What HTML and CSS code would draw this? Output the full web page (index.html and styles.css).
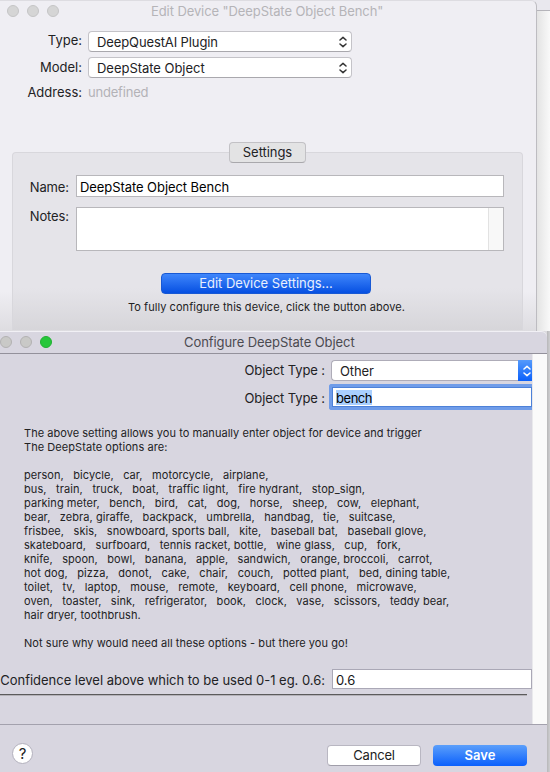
FILE: index.html
```html
<!DOCTYPE html>
<html lang="en">
<head>
<meta charset="utf-8">
<title>Edit Device</title>
<link rel="stylesheet" href="styles.css">
</head>
<body>
<section class="device-stage">
  <div class="device-window">
    <header class="device-title">
      <div class="lights"><i></i><i></i><i></i></div>
      <h1>Edit Device "DeepState Object Bench"</h1>
    </header>
    <div class="device-form">
      <label class="type-label">Type:</label>
      <div class="select"><span class="t-type">DeepQuestAI Plugin</span><svg viewBox="0 0 8 12" width="8" height="12"><path d="M1 4 4 1.4 7 4M1 8 4 10.6 7 8"/></svg></div>
      <label>Model:</label>
      <div class="select"><span class="t-model">DeepState Object</span><svg viewBox="0 0 8 12" width="8" height="12"><path d="M1 4 4 1.4 7 4M1 8 4 10.6 7 8"/></svg></div>
      <label class="address-label">Address:</label>
      <div class="undefined">undefined</div>
    </div>
    <div class="settings">
      <div class="tab">Settings</div>
      <div class="settings-grid">
        <label>Name:</label>
        <div class="name-field">DeepState Object Bench</div>
        <label>Notes:</label>
        <div class="notes-field"><div class="notes-scroll"></div></div>
      </div>
      <button class="edit-button"><span>Edit Device Settings...</span></button>
      <p class="hint">To fully configure this device, click the button above.</p>
    </div>
  </div>
</section>
<section class="config-stage">
  <div class="config-window">
    <header class="config-title">
      <div class="lights"><i></i><i></i><i class="green"></i></div>
      <h2>Configure DeepState Object</h2>
    </header>
    <div class="config-body">
      <div class="config-content">
        <div class="row row-select">
          <label>Object Type :</label>
          <div class="popup"><span>Other</span><div class="stepper"><svg viewBox="0 0 8 12" width="8" height="12"><path d="M1 4 4 1.4 7 4M1 8 4 10.6 7 8"/></svg></div></div>
        </div>
        <div class="row row-text">
          <label>Object Type :</label>
          <div class="focus-field"><span>bench</span></div>
        </div>
        <div class="notes">
          <p class="n1">The above setting allows you to manually enter object for device and trigger</p>
          <p>The DeepState options are:</p>
          <p>&nbsp;</p>
          <p>person,   bicycle,   car,   motorcycle,   airplane,</p>
          <p class="wide">bus,   train,   truck,   boat,   traffic light,   fire hydrant,   stop_sign,</p>
          <p>parking meter,   bench,   bird,   cat,   dog,   horse,   sheep,   cow,   elephant,</p>
          <p>bear,   zebra, giraffe,   backpack,   umbrella,   handbag,   tie,   suitcase,</p>
          <p>frisbee,   skis,   snowboard, sports ball,   kite,   baseball bat,   baseball glove,</p>
          <p>skateboard,   surfboard,   tennis racket, bottle,   wine glass,   cup,   fork,</p>
          <p class="n1">knife,   spoon,   bowl,   banana,   apple,   sandwich,   orange, broccoli,   carrot,</p>
          <p class="wide">hot dog,   pizza,   donot,   cake,   chair,   couch,   potted plant,   bed, dining table,</p>
          <p>toilet,   tv,   laptop,   mouse,   remote,   keyboard,   cell phone,   microwave,</p>
          <p>oven,   toaster,   sink,   refrigerator,   book,   clock,   vase,   scissors,   teddy bear,</p>
          <p>hair dryer, toothbrush.</p>
          <p>&nbsp;</p>
          <p>Not sure why would need all these options - but there you go!</p>
        </div>
        <div class="row row-confidence">
          <label>Confidence level above which to be used 0-1 eg. 0.6:</label>
          <div class="conf-field">0.6</div>
        </div>
        <div class="rule"></div>
      </div>
      <div class="scroll-track"></div>
    </div>
    <footer class="config-footer">
      <button class="help">?</button>
      <button class="cancel">Cancel</button>
      <button class="save">Save</button>
    </footer>
  </div>
</section>
</body>
</html>
```
FILE: styles.css
```css
* { box-sizing: border-box; }
body {
  margin: 0;
  width: 550px;
  height: 772px;
  overflow: hidden;
  font: 13px/16px Inter, "Liberation Sans", sans-serif;
  color: #222224;
}
h1, h2, p { margin: 0; font-weight: 400; }
button { font: inherit; padding: 0; margin: 0; }
label { white-space: nowrap; }
svg path { fill: none; stroke: #333; stroke-width: 1.5; stroke-linecap: round; stroke-linejoin: round; }

.device-stage {
  height: 331px;
  background: linear-gradient(#e9e8ee 0 10px, #b5b4ba 10px 11px, transparent 11px), linear-gradient(90deg, #fff 536px, #e2e2e2 536px, #f9f9f9 550px);
}
.device-window {
  width: 537px;
  height: 331px;
  border-right: 1px solid #bdbcc1;
  border-top: 1px solid #dddce1;
  border-radius: 0 6px 0 0;
  background: linear-gradient(#efeef3 290px, #dddce0 331px);
}
.device-title { display: flex; height: 21px; align-items: center; padding-bottom: 1px; }
.lights { display: flex; gap: 8px; padding-left: 7px; }
.lights i { width: 12px; height: 12px; border-radius: 50%; background: #d5d5d5; border: 1px solid #c5c5c6; }
.device-title h1 { font-size: 13px; line-height: 16px; color: #b5b4b8; margin-left: 92px; letter-spacing: -.09px; }
.device-form {
  display: grid;
  grid-template-columns: 82px 264px;
  column-gap: 6px;
  grid-template-rows: 21px 21px 16px;
  row-gap: 5px;
  margin-top: 9px;
}
.device-form label { text-align: right; padding-top: 2px; }
.device-form .type-label, .device-form .address-label { padding-top: 1px; }
.select {
  display: flex;
  justify-content: space-between;
  align-items: center;
  background: #fff;
  border: 1px solid #c4c3c8;
  border-bottom-color: #a9a8ad;
  border-radius: 4px;
  padding: 0 4px 0 8px;
}
.t-type { letter-spacing: -.11px; }
.t-model { letter-spacing: -.03px; }
.undefined { color: #b3b2b7; letter-spacing: -.2px; padding-top: 1px; }
.settings {
  width: 511px;
  height: 178px;
  margin: 53px 0 0 12px;
  border: 1px solid #d8d7dc;
  border-bottom: 0;
  border-radius: 4px 4px 0 0;
  background: linear-gradient(#e5e4e9 135px, #d6d5d9 178px);
}
.tab {
  width: 77px;
  height: 21px;
  margin: -11px auto 0 216px;
  text-align: center;
  line-height: 18px;
  border: 1px solid #c2c1c5;
  border-bottom-color: #a9a8ac;
  border-radius: 4px;
  background: #e3e3e4;
  letter-spacing: -.05px;
}
.settings-grid {
  display: grid;
  grid-template-columns: 56px 428px;
  column-gap: 7px;
  grid-template-rows: 22px 44px;
  row-gap: 10px;
  margin-top: 12px;
}
.settings-grid label { text-align: right; padding-top: 4px; letter-spacing: -.1px; }
.settings-grid label:last-of-type { padding-top: 1px; }
.name-field { background: #fff; border: 1px solid #b8b7bb; padding: 3px; line-height: 16px; color: #000; letter-spacing: -.07px; }
.notes-field { background: #fff; border: 1px solid #b8b7bb; display: flex; justify-content: flex-end; }
.notes-scroll { width: 15px; background: #f8f8f8; border-left: 1px solid #e2e2e2; }
.edit-button {
  display: block;
  width: 210px;
  height: 21px;
  margin: 22px 0 0 148px;
  padding-bottom: 1px;
  border: 1px solid #1859d4;
  border-radius: 4px;
  background: linear-gradient(#3f86fb, #0650e2);
  color: #e8effd;
}
.hint { font-size: 11px; line-height: 14px; margin: 6px 0 0 115px; white-space: nowrap; letter-spacing: .05px; }

.config-stage { height: 441px; background: linear-gradient(90deg, #dcdbdf 547px, #b7b7b9 547px, #cfcfd1 550px); }
.config-window {
  width: 547px;
  height: 441px;
  background: #d8d6e0;
  border-top: 1px solid #f1f0f5;
  border-radius: 0 6px 0 0;
}
.config-title { display: flex; align-items: center; height: 22px; padding-bottom: 1px; border-bottom: 1px solid #93919b; }
.config-title .lights { padding: 0; }
.config-title .lights i { background: #c9c9c7; border-color: #b3b2b2; }
.config-title .lights .green { background: #27c73b; border-color: #20b032; }
.config-title h2 { font-size: 13px; line-height: 16px; color: #4b4a50; margin-left: 132px; letter-spacing: -.08px; }
.config-body { display: flex; height: 371px; border-bottom: 1px solid #a3a1ad; }
.config-content { width: 532px; overflow: hidden; }
.scroll-track { width: 15px; background: #fafafa; border-left: 1px solid #e9e9ec; }
.row { display: flex; }
.row label { width: 325px; text-align: right; letter-spacing: -.1px; }
.row-select { margin-top: 6px; height: 21px; }
.row-select label { padding-top: 2px; }
.popup {
  width: 201px;
  height: 21px;
  margin-left: 6px;
  display: flex;
  justify-content: space-between;
  align-items: center;
  background: #fff;
  border: 1px solid #aeacb8;
  border-right: 0;
  border-radius: 4px 0 0 4px;
  padding-left: 8px;
  letter-spacing: -.1px;
}
.stepper { width: 14px; height: 21px; display: flex; align-items: center; justify-content: center; background: linear-gradient(#559afb, #0a60fb); padding-left: 3px; }
.stepper path { stroke: #fff; }
.row-text { margin-top: 3px; height: 26px; }
.row-text label { padding-top: 6px; }
.focus-field {
  width: 203px;
  margin-left: 4px;
  background: #fff;
  border: 3px solid #6f9ce9;
  border-right-width: 0;
  border-radius: 3px 0 0 3px;
  box-shadow: inset 0 0 0 1px #4d81d8;
  padding: 3px 4px 1px 4px;
  color: #000;
}
.focus-field span { display: inline-block; height: 15px; line-height: 16px; background: #a9cffe; letter-spacing: -.45px; }
.notes { margin: 16px 0 0 24px; font-size: 11px; line-height: 14px; letter-spacing: .06px; }
.notes p { height: 14px; white-space: pre; }
.notes .n1 { letter-spacing: .04px; }
.notes .wide { letter-spacing: .085px; }
.row-confidence { margin-top: 19px; height: 21px; }
.row-confidence label { padding-top: 3px; letter-spacing: -.02px; }
.conf-field { width: 200px; height: 20px; margin-left: 7px; background: #fff; border: 1px solid #aaa8b6; padding: 2px 3px; color: #161618; }
.rule { width: 527px; height: 2px; margin-top: 4px; background: linear-gradient(#5c5b5c 1px, #b5b3b9 1px); }
.config-footer { display: flex; height: 47px; padding-top: 18px; }
.help { width: 21px; height: 21px; margin-left: 12px; border: 1px solid #b3b1bd; border-radius: 50%; background: #fff; font-size: 15px; line-height: 18px; color: #222; }
.cancel { width: 94px; height: 21px; margin: 2px 0 0 294px; padding-bottom: 1px; background: #fff; border: 1px solid #b9b7c2; border-bottom-color: #a09eaa; border-radius: 4px; color: #222; line-height: 18px; letter-spacing: -.2px; }
.save { width: 94px; height: 21px; margin: 2px 0 0 12px; padding-bottom: 1px; background: linear-gradient(#5b9ffb, #0b60fc); border: 0; border-radius: 4px; color: #fff; font-weight: 600; line-height: 20px; }
```
